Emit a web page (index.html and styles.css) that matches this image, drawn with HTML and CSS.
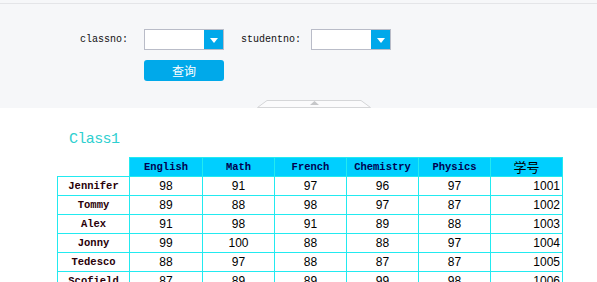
FILE: index.html
```html
<!DOCTYPE html>
<html lang="en">
<head>
    <meta charset="UTF-8">
    <title>Class Scores</title>
    <link rel="stylesheet" href="styles.css">
</head>
<body>
    <div class="top-gap"></div>

    <!-- Search Panel -->
    <div class="panel">
        <div class="filter-row">
            <span class="label label-class">classno:</span>
            <div class="select">
                <div class="select-box"></div>
                <div class="select-arrow"><span class="caret"></span></div>
            </div>
            <span class="label label-student">studentno:</span>
            <div class="select">
                <div class="select-box"></div>
                <div class="select-arrow"><span class="caret"></span></div>
            </div>
        </div>
        <button class="search-btn" type="button">查询</button>
        <div class="toggle-tab">
            <svg width="114" height="8" viewBox="0 0 114 8">
                <polygon points="0.5,7.5 10,0.5 104,0.5 113.5,7.5" fill="#fbfbfc" stroke="#d5d6d8"/>
                <polygon points="53,5 57.5,1 62,5" fill="#c6c7c9"/>
            </svg>
        </div>
    </div>

    <!-- Scores Table -->
    <div class="content">
        <h2 class="class-title">Class1</h2>
        <table class="scores">
            <colgroup>
                <col class="col-w"><col class="col-wide"><col class="col-w"><col class="col-w"><col class="col-w"><col class="col-w"><col class="col-w">
            </colgroup>
            <thead>
                <tr>
                    <th class="corner"></th>
                    <th>English</th>
                    <th>Math</th>
                    <th>French</th>
                    <th>Chemistry</th>
                    <th>Physics</th>
                    <th class="cn">学号</th>
                </tr>
            </thead>
            <tbody>
                <tr><th class="name">Jennifer</th><td>98</td><td>91</td><td>97</td><td>96</td><td>97</td><td class="id">1001</td></tr>
                <tr><th class="name">Tommy</th><td>89</td><td>88</td><td>98</td><td>97</td><td>87</td><td class="id">1002</td></tr>
                <tr><th class="name">Alex</th><td>91</td><td>98</td><td>91</td><td>89</td><td>88</td><td class="id">1003</td></tr>
                <tr><th class="name">Jonny</th><td>99</td><td>100</td><td>88</td><td>88</td><td>97</td><td class="id">1004</td></tr>
                <tr><th class="name">Tedesco</th><td>88</td><td>97</td><td>88</td><td>87</td><td>87</td><td class="id">1005</td></tr>
                <tr><th class="name">Scofield</th><td>87</td><td>89</td><td>89</td><td>99</td><td>98</td><td class="id">1006</td></tr>
            </tbody>
        </table>
    </div>
</body>
</html>
```

FILE: styles.css
```css
body {
    margin: 0;
    font-family: "Liberation Mono", monospace;
    background: #fff;
    overflow: hidden;
}
.top-gap {
    height: 3px;
    background: #f6f7f9;
}
.panel {
    background: #f6f7f9;
    border-top: 1px solid #e4e5e8;
    padding-top: 25px;
}
.filter-row {
    display: flex;
    align-items: center;
    height: 21px;
    padding-left: 80px;
}
.label {
    font-size: 10px;
    color: #111;
}
.label-class {
    margin-right: 16px;
}
.label-student {
    margin-left: 17px;
    margin-right: 10px;
}
.select {
    display: flex;
    width: 80px;
    height: 21px;
    box-sizing: border-box;
    border: 1px solid #b9bcc8;
    background: #fff;
}
.select-box {
    flex: 1;
}
.select-arrow {
    width: 19px;
    background: #00a8ea;
    display: flex;
    align-items: center;
    justify-content: center;
}
.caret {
    width: 0;
    height: 0;
    border-left: 4.5px solid transparent;
    border-right: 4.5px solid transparent;
    border-top: 5px solid #fff;
    margin-top: 1px;
}
.search-btn {
    display: block;
    margin: 10px 0 0 144px;
    width: 80px;
    height: 21px;
    padding: 0;
    border: none;
    border-radius: 3px;
    background: #00a9ea;
    color: #fff;
    font-family: "Noto Sans CJK SC", sans-serif;
    font-size: 12px;
    line-height: 21px;
}
.toggle-tab {
    margin: 19px 0 0 257px;
    height: 8px;
}
.toggle-tab svg {
    display: block;
}
.content {
    padding-left: 57px;
}
.class-title {
    margin: 22px 0 0 12px;
    font-size: 15px;
    line-height: 20px;
    font-weight: normal;
    letter-spacing: -0.6px;
    color: #2ecfd0;
}
.scores {
    margin-top: 7px;
    border-collapse: collapse;
    table-layout: fixed;
    width: 505px;
}
.col-w {
    width: 72px;
}
.col-wide {
    width: 73px;
}
.scores th,
.scores td {
    height: 18px;
    padding: 0;
    line-height: 18px;
    border: 1px solid #22eaf0;
    text-align: center;
    white-space: nowrap;
}
.scores thead th {
    background: #00cfff;
    color: #000050;
    font-size: 10.5px;
    font-weight: bold;
}
.scores thead th.corner {
    background: none;
    border: none;
}
.scores thead th.cn {
    font-family: "Noto Sans CJK SC", sans-serif;
    font-weight: normal;
    font-size: 13px;
    color: #000;
}
.scores th.name {
    font-size: 10.5px;
    font-weight: bold;
    color: #2a0008;
}
.scores td {
    font-family: "Liberation Sans", sans-serif;
    font-size: 12px;
    color: #000;
}
.scores td.id {
    text-align: right;
    padding-right: 2px;
}
```
